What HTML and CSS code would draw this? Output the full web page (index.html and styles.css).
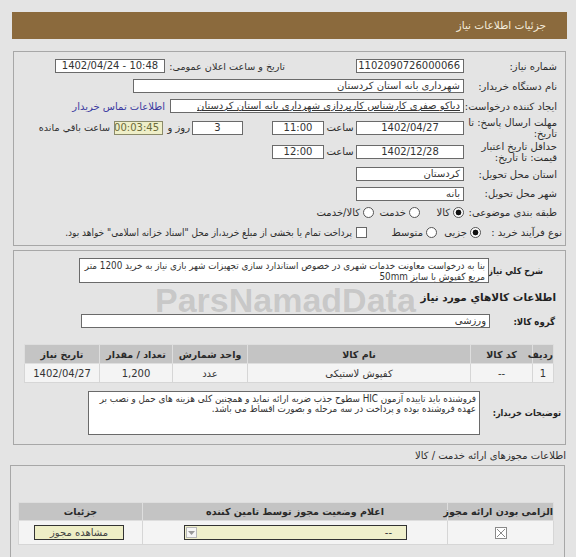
FILE: index.html
```html
<!DOCTYPE html>
<html lang="fa" dir="rtl">
<head>
<meta charset="utf-8">
<title>جزئیات اطلاعات نیاز</title>
<link rel="stylesheet" href="styles.css">
</head>
<body>
<div class="page">
  <div class="titlebar">جزئیات اطلاعات نیاز</div>

  <div class="sec sec1">
    <div class="row h20">
      <div class="lbl">شماره نیاز:</div>
      <div class="fld w108 c">1102090726000066</div>
      <div class="lbl2">تاریخ و ساعت اعلان عمومی:</div>
      <div class="fld w110 c ltr">1402/04/24 - 10:48</div>
    </div>
    <div class="row h20">
      <div class="lbl">نام دستگاه خریدار:</div>
      <div class="fld w331">شهرداری بانه استان کردستان</div>
    </div>
    <div class="row h20">
      <div class="lbl">ایجاد کننده درخواست:</div>
      <div class="fld w294 u">دیاکو صفری کارشناس کارپردازی شهرداری بانه استان کردستان</div>
      <a class="link">اطلاعات تماس خریدار</a>
    </div>
    <div class="row h23">
      <div class="lbl two">مهلت ارسال پاسخ: تا<br>تاریخ:</div>
      <div class="fld w108 c">1402/04/27</div>
      <div class="hour">ساعت</div>
      <div class="fld w52 c">11:00</div>
      <div class="fld w51 c days">3</div>
      <div class="rooz">روز و</div>
      <div class="fld w49 c timer">00:03:45</div>
      <div class="remain">ساعت باقي مانده</div>
    </div>
    <div class="row h25">
      <div class="lbl two">حداقل تاریخ اعتبار<br>قیمت: تا تاریخ:</div>
      <div class="fld w108 c">1402/12/28</div>
      <div class="hour">ساعت</div>
      <div class="fld w52 c">12:00</div>
    </div>
    <div class="row h20">
      <div class="lbl">استان محل تحویل:</div>
      <div class="fld w108">کردستان</div>
    </div>
    <div class="row h19">
      <div class="lbl">شهر محل تحویل:</div>
      <div class="fld w108">بانه</div>
    </div>
    <div class="row h19">
      <div class="lbl">طبقه بندی موضوعی:</div>
      <div class="opt o44"><span class="radio on"></span><span>کالا</span></div>
      <div class="opt o46"><span class="radio"></span><span>خدمت</span></div>
      <div class="opt"><span class="radio"></span><span class="ltr">کالا/خدمت</span></div>
    </div>
    <div class="row h20">
      <div class="lbl lbl9">نوع فرآیند خرید :</div>
      <div class="opt o44"><span class="radio on"></span><span>جزیی</span></div>
      <div class="opt o70"><span class="radio"></span><span>متوسط</span></div>
      <div class="opt"><span class="check"></span><span class="small">پرداخت تمام یا بخشی از مبلغ خرید،از محل "اسناد خزانه اسلامی" خواهد بود.</span></div>
    </div>
  </div>

  <div class="sec sec2">
    <div class="row">
      <div class="blbl b-sharh">شرح کلي نياز:</div>
      <div class="area a-sharh">بنا به درخواست معاونت خدمات شهری در خصوص استاندارد سازی تجهیزات شهر بازی نیاز به خرید 1200 متر<br>مربع کفپوش با سایز 50mm</div>
    </div>
    <div class="heading">اطلاعات کالاهاي مورد نياز</div>
    <div class="row h14 grp">
      <div class="blbl b-grp">گروه کالا:</div>
      <div class="fld w409">ورزشی</div>
    </div>
    <table class="items">
      <colgroup><col class="c21"><col class="c62"><col class="c223"><col class="c75"><col class="c73"><col class="c75"></colgroup>
      <tr><th>ردیف</th><th>کد کالا</th><th>نام کالا</th><th>واحد شمارش</th><th class="ltr">تعداد / مقدار</th><th>تاریخ نیاز</th></tr>
      <tr><td>1</td><td>--</td><td>کفپوش لاستیکی</td><td>عدد</td><td>1,200</td><td>1402/04/27</td></tr>
    </table>
    <div class="row desc">
      <div class="blbl b-desc">توضیحات خریدار:</div>
      <div class="area a-desc">فروشنده باید تاییده آزمون HIC سطوح جذب ضربه ارائه نماید و همچنین کلی هزینه های حمل و نصب بر<br>عهده فروشنده بوده و پرداخت در سه مرحله و بصورت اقساط می باشد.</div>
    </div>
  </div>

  <div class="permtitle">اطلاعات مجوزهای ارائه خدمت / کالا</div>

  <div class="sec sec3">
    <table class="perm">
      <colgroup><col class="p106"><col class="p305"><col class="p124"></colgroup>
      <tr><th>الزامی بودن ارائه مجوز</th><th>اعلام وضعیت مجوز توسط تامین کننده</th><th>جزئیات</th></tr>
      <tr>
        <td><svg class="xbox" width="12" height="12" viewBox="0 0 12 12"><rect x="0.5" y="0.5" width="11" height="11" fill="#fff" stroke="#8a8a8a"/><path d="M2 2L10 10M10 2L2 10" stroke="#8a8a8a" stroke-width="1"/></svg></td>
        <td><div class="select"><span class="selval">--</span><span class="arrow"><svg width="7" height="4" viewBox="0 0 7 4"><path d="M0 0H7L3.5 4Z" fill="#9a9a9a"/></svg></span></div></td>
        <td><div class="btn">مشاهده مجوز</div></td>
      </tr>
    </table>
  </div>

  <div class="wm wm-brand">ParsNamadData</div>
</div>
</body>
</html>
```

FILE: styles.css
```css
* { box-sizing: border-box; }

body {
  margin: 0;
  background: #e4e4e4;
  font-family: "DejaVu Sans", sans-serif;
  font-size: 10px;
  color: #2e2e2e;
  direction: rtl;
}

.page {
  position: relative;
  padding-top: 12px;
  overflow: hidden;
  height: 557px;
}

.ltr { direction: ltr; unicode-bidi: isolate; }

.titlebar {
  margin: 0 9px 0 12px;
  height: 27px;
  line-height: 27px;
  background: #8b6a3d;
  color: #f4ecdc;
  padding-right: 21px;
  font-size: 10.5px;
}

.sec {
  border: 1px solid #a7a7a7;
}

.sec1 {
  margin: 12px 10px 0 13px;
  padding: 4px 0 3px;
}

.row {
  display: flex;
  align-items: center;
  white-space: nowrap;
}

.h14 { height: 14px; }
.h19 { height: 19px; }
.h20 { height: 20px; }
.h23 { height: 23px; }
.h25 { height: 25px; }

.lbl {
  flex: none;
  width: 101px;
  padding-right: 8px;
}

.lbl.two {
  line-height: 11px;
}

.lbl9 {
  width: 84px;
  padding-right: 3px;
}

.lbl2 {
  flex: none;
  width: 118px;
  margin-right: 71px;
  margin-left: 2px;
  font-size: 9.6px;
}

.fld {
  flex: none;
  height: 14px;
  line-height: 12px;
  border: 1px solid #6a6a6a;
  background: #fff;
  padding: 0 3px;
  overflow: hidden;
  white-space: nowrap;
  color: #333;
}

.fld.c { text-align: center; }
.fld.u { text-decoration: underline; }

.w49 { width: 49px; }
.w51 { width: 51px; }
.w52 { width: 52px; }
.w108 { width: 108px; }
.w110 { width: 110px; }
.w294 { width: 294px; }
.w331 { width: 331px; }
.w409 { width: 409px; }

.link {
  margin-right: 5px;
  color: #3a3aa0;
}

.hour {
  flex: none;
  width: 32px;
  text-align: center;
}

.days { margin-right: 29px; }

.rooz {
  flex: none;
  width: 28px;
  padding-right: 2px;
}

.timer {
  margin-right: 1px;
  background: #efefc8;
  border-color: #8a8a6a;
  color: #6b6b3a;
}

.remain { margin-right: 4px; font-size: 9.6px; }

.opt {
  flex: none;
  display: flex;
  align-items: center;
  gap: 3px;
}

.o44 { width: 44px; }
.o46 { width: 46px; }
.o70 { width: 70px; }

.radio {
  flex: none;
  width: 11px;
  height: 11px;
  border-radius: 50%;
  border: 1px solid #555;
  background: #fff;
}

.radio.on {
  background: radial-gradient(circle, #111 0 2.6px, #fff 3.2px);
}

.check {
  flex: none;
  width: 11px;
  height: 11px;
  border: 1px solid #666;
  background: #fff;
  margin-left: 1px;
}

.small {
  font-family: "DejaVu Sans Condensed", "DejaVu Sans", sans-serif;
  font-size: 10px;
}

/* section 2 */
.sec2 {
  margin: 4px 10px 0 13px;
  padding: 7px 0 9px;
}

.blbl {
  flex: none;
  font-family: "DejaVu Sans Condensed", "DejaVu Sans", sans-serif;
  font-weight: bold;
  font-size: 9.5px;
  color: #222;
}

.b-sharh { width: 76px; padding-right: 22px; font-size: 9px; }
.b-grp { width: 75px; padding-right: 10px; }
.b-desc { width: 85px; padding-right: 4px; font-size: 9px; }

.area {
  flex: none;
  border: 1px solid #6a6a6a;
  background: #fff;
  padding: 1px 3px;
  line-height: 11px;
  white-space: nowrap;
  overflow: hidden;
  color: #333;
  font-family: "DejaVu Sans Condensed", "DejaVu Sans", sans-serif;
  font-size: 9.8px;
}

.a-sharh { width: 410px; height: 25px; }
.a-desc { width: 392px; height: 44px; padding-top: 2px; line-height: 10px; }

.heading {
  margin-top: 6px;
  height: 16px;
  line-height: 16px;
  padding-right: 9px;
  font-weight: bold;
  font-size: 10.5px;
  color: #222;
}

.grp { margin-top: 9px; }

table {
  border-collapse: collapse;
  table-layout: fixed;
}

.items {
  width: 529px;
  margin: 16px 11px 0 12px;
}

.c21 { width: 21px; }
.c62 { width: 62px; }
.c223 { width: 223px; }
.c75 { width: 75px; }
.c73 { width: 73px; }

th, td {
  border: 1px solid #d6d6d6;
  text-align: center;
  padding: 0;
  white-space: nowrap;
}

th {
  background: #c4c4c4;
  font-weight: bold;
  font-size: 9.5px;
  color: #2a2a2a;
  border-color: #dedede;
}

td {
  background: #f4f4f4;
  color: #333;
}

.items th { height: 19px; }
.items td { height: 19px; }

.desc { margin-top: 8px; }

.permtitle {
  height: 20px;
  line-height: 21px;
  padding-right: 10px;
  font-size: 10px;
}

.sec3 {
  margin: 0 11px 0 10px;
  padding: 36px 10px 20px 9px;
}

.perm { width: 535px; }
.p106 { width: 106px; }
.p305 { width: 305px; }
.p124 { width: 124px; }

.perm th { height: 18px; }
.perm td { height: 24px; }

.xbox { display: block; margin: 0 auto; }

.select {
  display: flex;
  align-items: center;
  width: 223px;
  height: 15px;
  margin-right: 40px;
  border: 1px solid #333;
  background: #f0f0cc;
}

.selval {
  flex: 1;
  text-align: right;
  padding-right: 14px;
}

.arrow {
  flex: none;
  width: 11px;
  height: 11px;
  margin-left: 1px;
  display: flex;
  align-items: center;
  justify-content: center;
  background: #f6f6f6;
  border: 1px solid #b9b9b9;
}

.btn {
  width: 90px;
  height: 15px;
  line-height: 13px;
  margin-right: 18px;
  border: 1px solid #333;
  background: #eeeec6;
  color: #444;
  text-align: center;
}

/* faint watermark overlay */
.wm {
  position: absolute;
  pointer-events: none;
  font-family: "Liberation Sans", sans-serif;
  font-weight: bold;
  color: rgba(140, 140, 140, 0.33);
  direction: ltr;
}

.wm-brand {
  left: 155px;
  top: 281px;
  font-size: 34px;
}
```
